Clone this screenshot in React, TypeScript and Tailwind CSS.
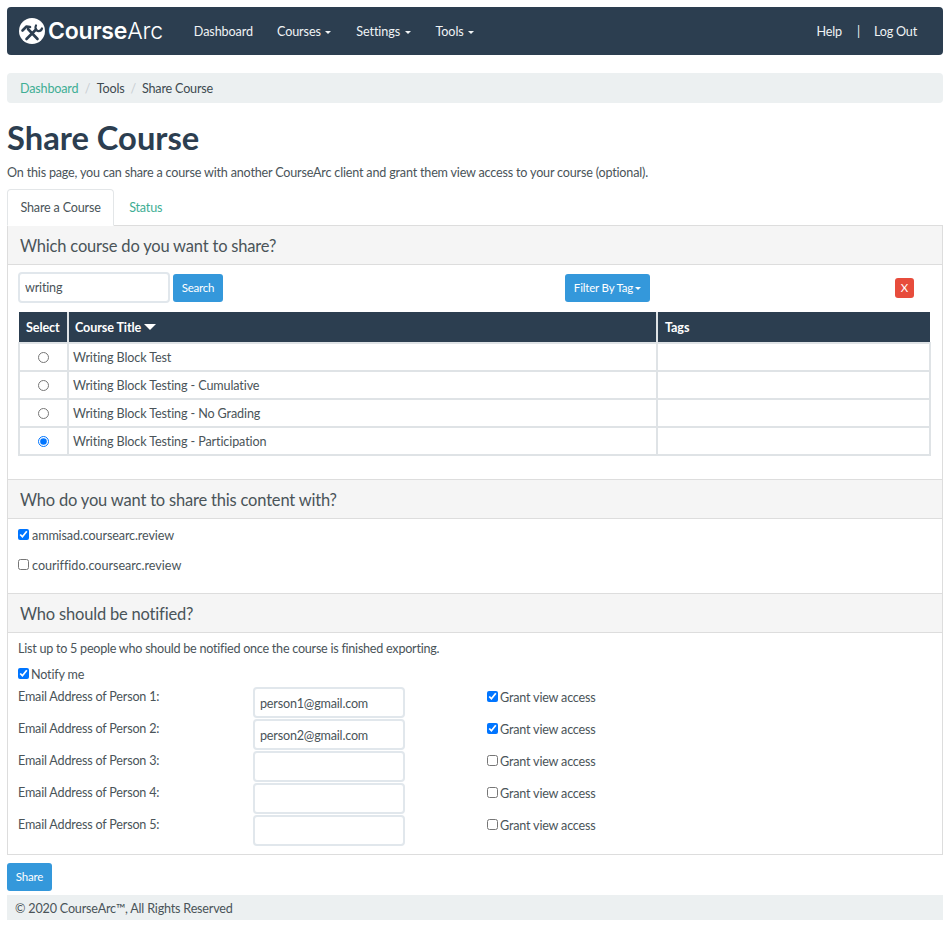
import React from "react";

const Caret = ({ big, tight }: { big?: boolean; tight?: boolean }) =>
  big ? (
    <span className="inline-block w-0 h-0 ml-[3px] align-[2px] border-x-[6px] border-t-[6px] border-x-transparent border-t-white" />
  ) : tight ? (
    <span className="inline-block w-0 h-0 ml-[2px] align-[2px] border-x-[3.5px] border-t-[3.5px] border-x-transparent border-t-current" />
  ) : (
    <span className="inline-block w-0 h-0 ml-[4.5px] mr-[1px] align-[2px] border-x-[3.5px] border-t-[3.5px] border-x-transparent border-t-current" />
  );

const Logo = () => (
  <div className="flex items-center text-white">
    <svg width="26" height="26" viewBox="0 0 26 26" className="shrink-0">
      <circle cx="13" cy="13" r="13" fill="#fff" />
      <g fill="none" stroke="#2c3e50" strokeLinecap="round" strokeLinejoin="round">
        <path d="M3.5 12.5 L7.5 8.5 L11 9" strokeWidth="2.6" />
        <path d="M9 11 L18.5 21" strokeWidth="2.6" />
        <path d="M7.5 21 L17 11.5" strokeWidth="2.6" />
        <path d="M17 7.5 A4 4 0 0 0 18.5 13 A4 4 0 0 0 23 10.5" strokeWidth="2.2" />
      </g>
    </svg>
    <span className="ml-[3px] text-[23px] leading-none tracking-[-0.2px] font-['Inter',sans-serif]">
      <span className="font-semibold">Course</span>
      <span className="font-light">Arc</span>
    </span>
  </div>
);

const NavLink = ({ label, caret }: { label: string; caret?: boolean }) => (
  <span className="whitespace-nowrap">
    {label}
    {caret && <Caret />}
  </span>
);

const PanelHeading = ({ children, cls }: { children: React.ReactNode; cls?: string }) => (
  <div className={`h-[39px] flex items-center px-[12px] bg-[#f5f5f5] border-b border-[#dddddd] text-[16.5px] ${cls ?? "pt-[1px]"}`}>
    {children}
  </div>
);

const rows = [
  { t: "Writing Block Test", on: false },
  { t: "Writing Block Testing - Cumulative", on: false },
  { t: "Writing Block Testing - No Grading", on: false },
  { t: "Writing Block Testing - Participation", on: true },
];

const people = [
  { n: 1, v: "person1@gmail.com", on: true },
  { n: 2, v: "person2@gmail.com", on: true },
  { n: 3, v: "", on: false },
  { n: 4, v: "", on: false },
  { n: 5, v: "", on: false },
];

const Box = ({ on }: { on: boolean }) => (
  <input type="checkbox" readOnly checked={on} className="w-[11px] h-[11px] m-0 mb-[3px] shrink-0" />
);

export default function App() {
  return (
    <div className="w-[950px] h-[927px] overflow-hidden bg-white px-[7px] pt-[7px] text-[12.6px] tracking-[-0.19px] leading-[18px] text-[#4a5459] font-['Lato',sans-serif]">
      <nav className="h-[48px] w-[936px] flex items-center bg-[#2c3e50] rounded-[4px] text-white pl-[12px] pr-[26px]">
        <Logo />
        <div className="flex items-center gap-[24px] ml-[31px] pt-[1px] text-[#f0f3f5] tracking-[-0.1px]">
          <NavLink label="Dashboard" />
          <NavLink label="Courses" caret />
          <NavLink label="Settings" caret />
          <NavLink label="Tools" caret />
        </div>
        <div className="ml-auto flex items-center pt-[1px] text-[#f0f3f5]">
          <span>Help</span>
          <span className="ml-[15px] mr-[14px]">|</span>
          <span>Log Out</span>
        </div>
      </nav>

      <div className="mt-[18px] h-[30px] w-[936px] flex items-center pt-[1px] bg-[#ecf0f1] rounded-[4px] px-[13px] text-[#3e4a50]">
        <span className="text-[#3fae94]">Dashboard</span>
        <span className="mx-[6.5px] text-[#c8ced2]">/</span>
        <span>Tools</span>
        <span className="mx-[6px] text-[#c8ced2]">/</span>
        <span>Share Course</span>
      </div>

      <h1 className="mt-[16px] text-[32.7px] tracking-normal leading-[38px] font-bold text-[#2c3e50]">Share Course</h1>
      <p className="mt-[7px] h-[18px] whitespace-nowrap">
        On this page, you can share a course with another CourseArc client and grant them view access to your course (optional).
      </p>

      <div className="mt-[7px] flex h-[37px] w-[936px] border-b border-[#dddddd]">
        <div className="h-[37px] px-[12.5px] flex items-center bg-white border border-[#e3e6e8] border-b-white rounded-t-[4px]">
          Share a Course
        </div>
        <div className="px-[15px] pt-[1px] flex items-center text-[#3fae94]">Status</div>
      </div>

      <div className="w-[936px] h-[629px] border border-t-0 border-[#dddddd]">
        <PanelHeading>Which course do you want to share?</PanelHeading>
        <div className="h-[215px] px-[10px] border-b border-[#dddddd]">
          <div className="h-[47px] pb-[1px] flex items-center">
            <input
              readOnly
              value="writing"
              className="w-[152px] h-[31px] mb-[2px] px-[5px] bg-white border-2 border-[#e1e7ec] rounded-[4px] text-[#4a5459] outline-none"
            />
            <button className="ml-[3px] h-[28px] w-[50px] bg-[#3498db] rounded-[3px] text-white text-[11.5px]">Search</button>
            <button className="ml-[342px] h-[28px] w-[85px] bg-[#3498db] rounded-[3px] text-white text-[11.5px] whitespace-nowrap">
              Filter By Tag<Caret tight />
            </button>
            <button className="ml-[245px] h-[20px] w-[19px] bg-[#e74c3c] rounded-[3px] text-white text-[11.5px]">X</button>
          </div>
          <table className="w-[913px] border-collapse table-fixed">
            <thead>
              <tr className="h-[31px] bg-[#2c3e50] text-white font-bold text-left tracking-[-0.1px]">
                <th className="w-[49px] px-[7px] pt-[2px] border-r-2 border-[#dfe3e6]">Select</th>
                <th className="w-[589px] px-[6px] pt-[2px] border-r-2 border-[#dfe3e6]">
                  Course Title
                  <Caret big />
                </th>
                <th className="px-[7px] pt-[2px]">Tags</th>
              </tr>
            </thead>
            <tbody>
              {rows.map((r) => (
                <tr key={r.t} className="h-[28px] tracking-[-0.12px]">
                  <td className="border-2 border-[#dfe3e6] text-center align-middle">
                    <input type="radio" name="course" readOnly checked={r.on} className="w-[11px] h-[11px] m-0 mb-[1px] align-middle" />
                  </td>
                  <td className="border-2 border-[#dfe3e6] px-[4px] pt-[1px]">{r.t}</td>
                  <td className="border-2 border-[#dfe3e6]"></td>
                </tr>
              ))}
            </tbody>
          </table>
        </div>

        <PanelHeading>Who do you want to share this content with?</PanelHeading>
        <div className="h-[75px] px-[10px] pt-[8px] border-b border-[#dddddd]">
          <label className="flex items-center gap-[3px] h-[18px] tracking-[-0.12px]">
            <Box on={true} />
            ammisad.coursearc.review
          </label>
          <label className="flex items-center gap-[3px] h-[18px] mt-[12px] tracking-[-0.02px]">
            <Box on={false} />
            couriffido.coursearc.review
          </label>
        </div>

        <PanelHeading cls="pt-[2px]">Who should be notified?</PanelHeading>
        <div className="px-[10px] pt-[7px]">
          <p className="h-[18px] tracking-[-0.25px]">List up to 5 people who should be notified once the course is finished exporting.</p>
          <label className="mt-[8px] flex items-center gap-[2px] h-[18px]">
            <Box on={true} />
            Notify me
          </label>
          <div className="mt-[3px] flex flex-col gap-[1px]">
            {people.map((p) => (
              <div key={p.n} className="grid grid-cols-[235px_234px_1fr] h-[31px]">
                <span className="h-[18px] pt-[1px] box-content">Email Address of Person {p.n}:</span>
                <input
                  readOnly
                  value={p.v}
                  className="w-[152px] h-[31px] px-[5px] pt-[2px] bg-white border-2 border-[#e1e7ec] rounded-[4px] text-[#4a5459] outline-none"
                />
                <label className="flex items-center gap-[2px] h-[18px] mt-[2px]">
                  <Box on={p.on} />
                  Grant view access
                </label>
              </div>
            ))}
          </div>
        </div>
      </div>

      <button className="mt-[8px] block h-[28px] w-[45px] bg-[#3498db] rounded-[3px] text-white text-[11.5px]">Share</button>
      <footer className="mt-[4px] h-[25px] w-[936px] flex items-center pt-[2px] bg-[#ecf0f1] px-[8px]">
        © 2020 CourseArc™, All Rights Reserved
      </footer>
    </div>
  );
}
